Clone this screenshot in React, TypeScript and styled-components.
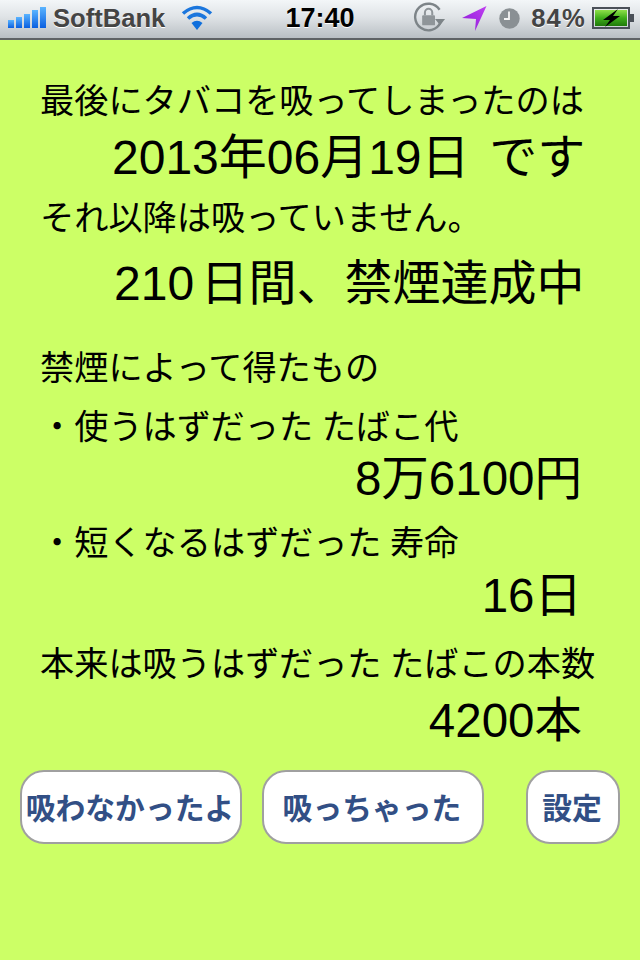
import React from 'react';
import styled, { createGlobalStyle } from 'styled-components';

const GlobalStyle = createGlobalStyle`
  html, body {
    margin: 0;
    padding: 0;
    background: #ccff66;
  }
  * {
    box-sizing: border-box;
  }
`;

const Screen = styled.div`
  width: 640px;
  height: 960px;
  display: flex;
  flex-direction: column;
  background: #ccff66;
  font-family: 'Liberation Sans', 'Noto Sans CJK JP', sans-serif;
  overflow: hidden;
`;

const StatusBar = styled.div`
  height: 40px;
  display: grid;
  grid-template-columns: 1fr auto 1fr;
  align-items: center;
  padding: 0 5px 2px 5px;
  background: linear-gradient(#f3f6f8 0%, #dfe3e6 45%, #b9bfc4 100%);
  border-bottom: 2px solid #5f6366;
`;

const StatusLeft = styled.div`
  display: flex;
  align-items: center;
  padding-left: 3px;
`;

const Carrier = styled.span`
  margin-left: 7px;
  font-size: 25.6px;
  font-weight: 700;
  color: #444;
  text-shadow: 0 1px 0 #fff;
`;

const Clock = styled.span`
  font-size: 27px;
  font-weight: 700;
  color: #000;
  text-shadow: 0 1px 0 #fff;
`;

const StatusRight = styled.div`
  display: flex;
  align-items: center;
  justify-content: flex-end;
`;

const Percent = styled.span`
  margin: 0 6px 0 11px;
  font-size: 25.6px;
  font-weight: 700;
  letter-spacing: 1.2px;
  color: #444;
  text-shadow: 0 1px 0 #fff;
`;

const Content = styled.div`
  display: flex;
  flex-direction: column;
  padding: 38px 58px 0 40px;
`;

const Label = styled.div<{ $h: number }>`
  height: ${(p) => p.$h}px;
  display: flex;
  align-items: center;
  font-size: 34.2px;
  line-height: 1;
  white-space: pre;
  word-spacing: -1px;
  color: #000;
`;

const Big = styled.div<{ $h: number; $indent?: number; $space?: number }>`
  height: ${(p) => p.$h}px;
  padding-left: ${(p) => p.$indent || 0}px;
  display: flex;
  align-items: center;
  justify-content: ${(p) => (p.$indent ? 'flex-start' : 'flex-end')};
  font-size: ${(p) => (p.$indent ? 48 : 47.5)}px;
  line-height: 1;
  white-space: pre;
  word-spacing: ${(p) => p.$space || 0}px;
  color: #000;
`;

const Buttons = styled.div`
  display: flex;
  gap: 20px;
  padding: 0 20px;
  margin-top: 34px;
`;

const Button = styled.button<{ $w: number; $end?: boolean }>`
  width: ${(p) => p.$w}px;
  height: 74px;
  margin-left: ${(p) => (p.$end ? 'auto' : '0')};
  padding: 0 2px 3px 0;
  background: #fff;
  border: 2px solid #a0a0a0;
  border-radius: 24px;
  font-family: inherit;
  font-size: 29.8px;
  font-weight: 700;
  white-space: nowrap;
  color: #324f85;
`;

const SignalBars = () => (
  <svg width="38" height="24" viewBox="0 0 38 24">
    <defs>
      <linearGradient id="sig" x1="0" y1="0" x2="0" y2="1">
        <stop offset="0" stopColor="#5ab4ff" />
        <stop offset="1" stopColor="#0a5fe0" />
      </linearGradient>
    </defs>
    <rect x="0" y="14" width="6" height="8" fill="url(#sig)" />
    <rect x="8" y="11" width="6" height="11" fill="url(#sig)" />
    <rect x="16" y="8" width="6" height="14" fill="url(#sig)" />
    <rect x="24" y="4" width="6" height="18" fill="url(#sig)" />
    <rect x="32" y="1" width="6" height="21" fill="url(#sig)" />
  </svg>
);

const Wifi = () => (
  <svg width="32" height="26" viewBox="0 0 32 26" style={{ marginLeft: 16 }}>
    <g fill="none" stroke="#1b76dd" strokeWidth="3.6">
      <path d="M2 8.5 Q16 -3.5 30 8.5" />
      <path d="M7 13.5 Q16 5.5 25 13.5" />
    </g>
    <path d="M10.5 18 Q16 13.5 21.5 18 L16 25 Z" fill="#0f6fdc" />
  </svg>
);

const RotationLock = () => (
  <svg width="33" height="32" viewBox="0 0 36 34">
    <path d="M30 22 A14.5 14.5 0 1 1 29 8" fill="none" stroke="#7d8488" strokeWidth="2.6" />
    <path d="M24 18 L35 18 L29.5 25 Z" fill="#7d8488" />
    <rect x="10" y="14" width="14" height="11" rx="1" fill="#8f9599" />
    <path d="M13 14 V11 a4 4 0 0 1 8 0 V14" fill="none" stroke="#8f9599" strokeWidth="2.2" />
  </svg>
);

const LocationArrow = () => (
  <svg width="25" height="25" viewBox="0 0 25 25" style={{ marginLeft: 16 }}>
    <defs>
      <linearGradient id="loc" x1="1" y1="0" x2="0" y2="1">
        <stop offset="0" stopColor="#c040f0" />
        <stop offset="1" stopColor="#8a18d8" />
      </linearGradient>
    </defs>
    <path d="M24.5 0 L0 12 L14 13 L13 25 Z" fill="url(#loc)" />
  </svg>
);

const AlarmClock = () => (
  <svg width="21" height="21" viewBox="0 0 21 21" style={{ marginLeft: 12 }}>
    <circle cx="10.5" cy="10.5" r="10.2" fill="#8a9094" />
    <path d="M10 3.5 V11 H5" fill="none" stroke="#f4f4f4" strokeWidth="1.8" />
  </svg>
);

const Battery = () => (
  <svg width="43" height="22" viewBox="0 0 43 22">
    <defs>
      <linearGradient id="bat" x1="0" y1="0" x2="0" y2="1">
        <stop offset="0" stopColor="#8fe04a" />
        <stop offset="0.5" stopColor="#3fae1a" />
        <stop offset="1" stopColor="#1f7a0a" />
      </linearGradient>
    </defs>
    <rect x="1" y="1" width="36" height="20" fill="none" stroke="#4a5058" strokeWidth="2" />
    <rect x="3" y="3" width="32" height="16" fill="url(#bat)" />
    <rect x="38" y="7" width="4" height="8" fill="#4a5058" />
    <path d="M26 2 L11 13 L18 13 L13 20 L28 9 L21 9 Z" fill="#000" />
  </svg>
);

const App = () => (
  <Screen>
    <GlobalStyle />
    <StatusBar>
      <StatusLeft>
        <SignalBars />
        <Carrier>SoftBank</Carrier>
        <Wifi />
      </StatusLeft>
      <Clock>17:40</Clock>
      <StatusRight>
        <RotationLock />
        <LocationArrow />
        <AlarmClock />
        <Percent>84%</Percent>
        <Battery />
      </StatusRight>
    </StatusBar>
    <Content>
      <Label $h={46}>最後にタバコを吸ってしまったのは</Label>
      <Big $h={68} $indent={72} $space={-3.5}>2013年06月19日  です</Big>
      <Label $h={52}>それ以降は吸っていません。</Label>
      <Big $h={80} $indent={74} $space={-7}>210 日間、禁煙達成中</Big>
      <Label $h={88}>禁煙によって得たもの</Label>
      <Label $h={30}>・使うはずだった たばこ代</Label>
      <Big $h={74}>8万6100円</Big>
      <Label $h={54}>・短くなるはずだった 寿命</Label>
      <Big $h={52}>16日</Big>
      <Label $h={84}>本来は吸うはずだった たばこの本数</Label>
      <Big $h={30}>4200本</Big>
    </Content>
    <Buttons>
      <Button $w={222}>吸わなかったよ</Button>
      <Button $w={222}>吸っちゃった</Button>
      <Button $w={94} $end>設定</Button>
    </Buttons>
  </Screen>
);

export default App;
